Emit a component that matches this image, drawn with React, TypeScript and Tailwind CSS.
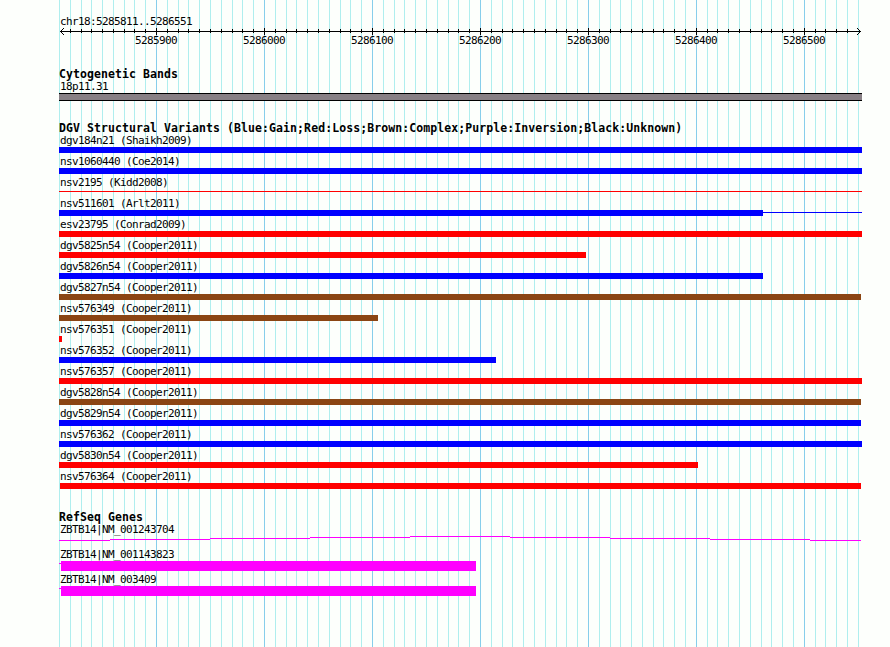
const BP_START = 5285810;
const PX_PER_10BP = 10.796;

const ticks = Array.from({ length: 75 }, (_, k) => ({
  x: Math.floor(59.42 + k * PX_PER_10BP),
  pos: BP_START + k * 10,
  major: k % 10 === 9
}));

type Variant = { name: string; color: string; from: number; to: number; tail?: boolean };

const BLUE = "bg-[#0000ff]";
const RED = "bg-[#ff0000]";
const BROWN = "bg-[#8b4513]";

const variants: Variant[] = [
  { name: "dgv184n21 (Shaikh2009)", color: BLUE, from: 59, to: 862 },
  { name: "nsv1060440 (Coe2014)", color: BLUE, from: 59, to: 862 },
  { name: "nsv2195 (Kidd2008)", color: RED, from: 59, to: 59, tail: true },
  { name: "nsv511601 (Arlt2011)", color: BLUE, from: 59, to: 763, tail: true },
  { name: "esv23795 (Conrad2009)", color: RED, from: 59, to: 862 },
  { name: "dgv5825n54 (Cooper2011)", color: RED, from: 59, to: 586 },
  { name: "dgv5826n54 (Cooper2011)", color: BLUE, from: 59, to: 763 },
  { name: "dgv5827n54 (Cooper2011)", color: BROWN, from: 59, to: 861 },
  { name: "nsv576349 (Cooper2011)", color: BROWN, from: 59, to: 378 },
  { name: "nsv576351 (Cooper2011)", color: RED, from: 59, to: 62 },
  { name: "nsv576352 (Cooper2011)", color: BLUE, from: 59, to: 496 },
  { name: "nsv576357 (Cooper2011)", color: RED, from: 59, to: 862 },
  { name: "dgv5828n54 (Cooper2011)", color: BROWN, from: 59, to: 861 },
  { name: "dgv5829n54 (Cooper2011)", color: BLUE, from: 59, to: 861 },
  { name: "nsv576362 (Cooper2011)", color: BLUE, from: 59, to: 862 },
  { name: "dgv5830n54 (Cooper2011)", color: RED, from: 59, to: 698 },
  { name: "nsv576364 (Cooper2011)", color: RED, from: 60, to: 861 }
];

function Grid() {
  return (
    <svg className="absolute inset-0" width="890" height="647" shapeRendering="crispEdges">
      {ticks.map((t) => (
        <rect key={t.pos} x={t.x} y="0" width="1" height="647" fill={t.major ? "#87ceeb" : "#afeeee"} />
      ))}
    </svg>
  );
}

function Ruler() {
  return (
    <div className="relative h-[19px]">
      <svg className="absolute -top-px left-0" width="890" height="12" shapeRendering="crispEdges">
        <rect x="60" y="4" width="801" height="1" />
        {ticks.slice(1, -1).map((t) => (
          <rect key={t.pos} x={t.x} y={t.major ? 1 : 2} width="1" height={t.major ? 7 : 4} />
        ))}
        <path d="M60 4h1v1h-1zM61 3h1v1h-1zM62 2h1v1h-1zM63 1h1v1h-1zM61 5h1v1h-1zM62 6h1v1h-1zM63 7h1v1h-1z" />
        <path d="M860 4h1v1h-1zM859 3h1v1h-1zM858 2h1v1h-1zM857 1h1v1h-1zM859 5h1v1h-1zM858 6h1v1h-1zM857 7h1v1h-1z" />
      </svg>
      {ticks
        .filter((t) => t.major)
        .map((t) => (
          <span key={t.pos} className="absolute top-[6px] leading-[13px]" style={{ left: t.x - 21 }}>
            {t.pos}
          </span>
        ))}
    </div>
  );
}

function Heading({ children }: { children: string }) {
  return (
    <h2 className="h-[12px] pl-[59px] text-[11.5px] leading-[12px] font-bold tracking-[0.08px]">{children}</h2>
  );
}

function Label({ children }: { children: string }) {
  return <div className="h-[13px] pl-[60px] leading-[13px]">{children}</div>;
}

function VariantRow({ v }: { v: Variant }) {
  return (
    <div className="h-[21px]">
      <Label>{v.name}</Label>
      <div className="flex h-[6px]" style={{ paddingLeft: v.from }}>
        <div className={v.color} style={{ width: v.to - v.from }} />
        {v.tail ? <div className={`mt-[2px] h-px ${v.color}`} style={{ width: 862 - v.to }} /> : null}
      </div>
    </div>
  );
}

function Gene({ name }: { name: string }) {
  return (
    <div className="h-[25px]">
      <Label>{name}</Label>
      <div className="flex h-[10px] pl-[59px]">
        <div className="mt-[2px] h-px w-[2px] bg-[#ff00ff]" />
        <div className="w-[415px] bg-[#ff00ff]" />
      </div>
    </div>
  );
}

export default function App() {
  return (
    <div className="relative h-[647px] w-[890px] overflow-hidden bg-[#fdfffc] font-['DejaVu_Sans_Mono',monospace] text-[11px] tracking-[-0.623px] whitespace-pre text-black">
      <Grid />
      <div className="relative pt-[15px]">
        <Label>chr18:5285811..5286551</Label>
        <Ruler />

        <section className="pt-[21px]">
          <Heading>Cytogenetic Bands</Heading>
          <Label>18p11.31</Label>
          <div className="ml-[59px] h-[8px] w-[803px] border-y border-black bg-[#888085]" />
        </section>

        <section className="pt-[21px]">
          <Heading>DGV Structural Variants (Blue:Gain;Red:Loss;Brown:Complex;Purple:Inversion;Black:Unknown)</Heading>
          {variants.map((v) => (
            <VariantRow key={v.name} v={v} />
          ))}
        </section>

        <section className="pt-[20px]">
          <Heading>RefSeq Genes</Heading>
          <Label>ZBTB14|NM_001243704</Label>
          <svg className="block" width="890" height="12" shapeRendering="crispEdges" fill="#ff00ff">
            {[4, 3, 2, 1, 0, 1, 2, 3, 4].map((y, i) => {
              const x = i === 0 ? 59 : 10 + i * 100;
              const end = i === 8 ? 861 : 110 + i * 100;
              return <rect key={i} x={x} y={y} width={end - x} height="1" />;
            })}
          </svg>
          <Gene name="ZBTB14|NM_001143823" />
          <Gene name="ZBTB14|NM_003409" />
        </section>
      </div>
    </div>
  );
}
